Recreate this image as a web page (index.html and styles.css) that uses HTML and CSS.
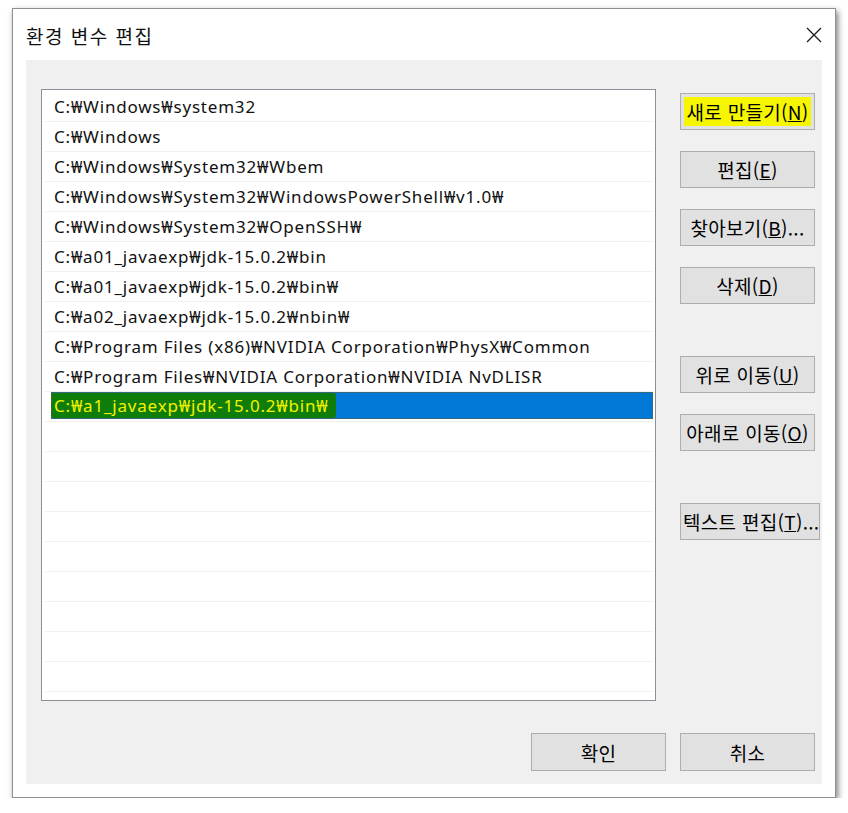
FILE: index.html
```html
<!DOCTYPE html>
<html lang="ko">
<head>
    <meta charset="UTF-8">
    <meta name="viewport" content="width=device-width, initial-scale=1.0">
    <title>환경 변수 편집</title>
    <link rel="stylesheet" href="styles.css">
</head>
<body>
    <div class="dialog">
        <div class="titlebar">
            <span class="title">환경 변수 편집</span>
            <svg class="close" width="16" height="16" viewBox="0 0 16 16">
                <path d="M1 1 L15 15 M15 1 L1 15" stroke="#1a1a1a" stroke-width="1.3" fill="none"/>
            </svg>
        </div>

        <div class="panel">
            <div class="main">
                <div class="listbox">
                    <div class="row"><span class="item">C:₩Windows₩system32</span></div>
                    <div class="row"><span class="item">C:₩Windows</span></div>
                    <div class="row"><span class="item">C:₩Windows₩System32₩Wbem</span></div>
                    <div class="row"><span class="item">C:₩Windows₩System32₩WindowsPowerShell₩v1.0₩</span></div>
                    <div class="row"><span class="item">C:₩Windows₩System32₩OpenSSH₩</span></div>
                    <div class="row"><span class="item">C:₩a01_javaexp₩jdk-15.0.2₩bin</span></div>
                    <div class="row"><span class="item">C:₩a01_javaexp₩jdk-15.0.2₩bin₩</span></div>
                    <div class="row"><span class="item">C:₩a02_javaexp₩jdk-15.0.2₩nbin₩</span></div>
                    <div class="row"><span class="item">C:₩Program Files (x86)₩NVIDIA Corporation₩PhysX₩Common</span></div>
                    <div class="row"><span class="item">C:₩Program Files₩NVIDIA Corporation₩NVIDIA NvDLISR</span></div>
                    <div class="row selected"><span class="item"><span class="marker">C:₩a1_javaexp₩jdk-15.0.2₩bin₩</span></span></div>
                    <div class="row"></div>
                    <div class="row"></div>
                    <div class="row"></div>
                    <div class="row"></div>
                    <div class="row"></div>
                    <div class="row"></div>
                    <div class="row"></div>
                    <div class="row"></div>
                    <div class="row"></div>
                </div>

                <div class="side">
                    <div class="group">
                        <button class="btn"><span class="hl">새로 만들기(<u>N</u>)</span></button>
                        <button class="btn">편집(<u>E</u>)</button>
                        <button class="btn">찾아보기(<u>B</u>)...</button>
                        <button class="btn">삭제(<u>D</u>)</button>
                    </div>
                    <div class="group">
                        <button class="btn">위로 이동(<u>U</u>)</button>
                        <button class="btn">아래로 이동(<u>O</u>)</button>
                    </div>
                    <div class="group">
                        <button class="btn wide">텍스트 편집(<u>T</u>)...</button>
                    </div>
                </div>
            </div>

            <div class="footer">
                <button class="btn">확인</button>
                <button class="btn">취소</button>
            </div>
        </div>
    </div>
</body>
</html>
```

FILE: styles.css
```css
body {
    margin: 0;
    background: #ffffff;
    font-family: "Noto Sans", "Noto Sans CJK KR", sans-serif;
    color: #000000;
}
.dialog {
    margin: 8px 0 0 12px;
    width: 824px;
    height: 790px;
    box-sizing: border-box;
    background: #ffffff;
    border: 1px solid #8f8f8f;
    box-shadow: 2px 3px 6px rgba(0, 0, 0, 0.5);
}
.titlebar {
    height: 51px;
    display: flex;
    align-items: center;
    justify-content: space-between;
    padding: 0 13px 0 13px;
}
.title {
    font-family: "Noto Sans CJK KR", sans-serif;
    font-size: 19px;
    letter-spacing: 1.5px;
    color: #111;
    margin-top: 2px;
}
.close {
    margin-right: 0;
    margin-top: 1px;
}
.panel {
    margin: 0 13px;
    height: 724px;
    box-sizing: border-box;
    background: #f0f0f0;
    padding: 29px 0 0 15px;
}
.main {
    display: flex;
    gap: 24px;
}
.listbox {
    width: 615px;
    height: 612px;
    box-sizing: border-box;
    background: #ffffff;
    border: 1px solid #8b9099;
    padding: 2px 2px 0 3px;
    overflow: hidden;
}
.row {
    height: 30px;
    box-sizing: border-box;
    border-bottom: 1px solid #f0f0f0;
    padding-left: 6px;
    display: flex;
    align-items: center;
}
.item {
    font-size: 17px;
    letter-spacing: 0.8px;
    padding-left: 3px;
    white-space: nowrap;
    color: #111;
}
.row.selected {
    padding: 0 0 2px 6px;
    align-items: stretch;
}
.row.selected .item {
    flex: 1;
    padding-left: 0;
    background: #0078d7;
    outline: 1px dotted #6b5a2a;
    outline-offset: -1px;
    display: flex;
    align-items: center;
}
.marker {
    background: #0f7d0a;
    color: #f2f200;
    padding: 1px 8px 1px 3px;
    border-radius: 3px;
}
.side {
    width: 140px;
    display: flex;
    flex-direction: column;
    gap: 52px;
    padding-top: 4px;
}
.group {
    display: flex;
    flex-direction: column;
    gap: 21px;
}
.btn {
    width: 135px;
    height: 37px;
    box-sizing: border-box;
    background: #e1e1e1;
    border: 1px solid #adadad;
    border-radius: 0;
    font-family: "Noto Sans CJK KR", sans-serif;
    font-size: 19px;
    letter-spacing: 0.3px;
    color: #000;
    padding: 0;
    white-space: nowrap;
}
.btn.wide {
    width: 140px;
    text-align: left;
    padding-left: 2px;
}
.hl {
    background: #f6f600;
    padding: 1px 2px;
}
.footer {
    display: flex;
    justify-content: flex-end;
    gap: 14px;
    margin-top: 32px;
    padding-right: 7px;
}
.footer .btn {
    height: 38px;
}
```
